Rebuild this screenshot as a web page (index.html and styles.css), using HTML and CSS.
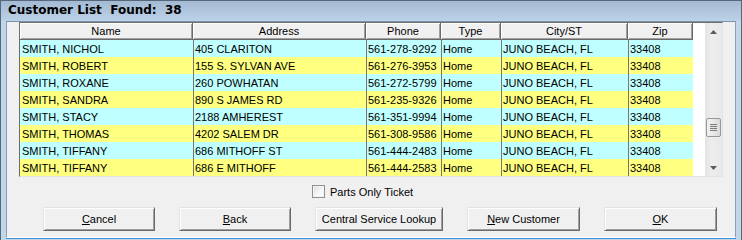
FILE: index.html
```html
<!DOCTYPE html>
<html lang="en">
    <head>
        <meta charset="UTF-8">
        <title>Customer List</title>
        <link rel="stylesheet" href="styles.css">
    </head>
    <body>
        <div class="window">
            <div class="titlebar">Customer List  Found:  38</div>
            <div class="client">
                <div class="grid">
                    <div class="grid-view">
                        <div class="row head">
                            <div class="cell">Name</div>
                            <div class="cell">Address</div>
                            <div class="cell">Phone</div>
                            <div class="cell">Type</div>
                            <div class="cell">City/ST</div>
                            <div class="cell">Zip</div>
                        </div>
                        <div class="row cyan">
                            <div class="cell">SMITH, NICHOL</div>
                            <div class="cell">405 CLARITON</div>
                            <div class="cell">561-278-9292</div>
                            <div class="cell">Home</div>
                            <div class="cell">JUNO BEACH, FL</div>
                            <div class="cell">33408</div>
                        </div>
                        <div class="row yellow">
                            <div class="cell">SMITH, ROBERT</div>
                            <div class="cell">155 S. SYLVAN AVE</div>
                            <div class="cell">561-276-3953</div>
                            <div class="cell">Home</div>
                            <div class="cell">JUNO BEACH, FL</div>
                            <div class="cell">33408</div>
                        </div>
                        <div class="row cyan">
                            <div class="cell">SMITH, ROXANE</div>
                            <div class="cell">260 POWHATAN</div>
                            <div class="cell">561-272-5799</div>
                            <div class="cell">Home</div>
                            <div class="cell">JUNO BEACH, FL</div>
                            <div class="cell">33408</div>
                        </div>
                        <div class="row yellow">
                            <div class="cell">SMITH, SANDRA</div>
                            <div class="cell">890 S JAMES RD</div>
                            <div class="cell">561-235-9326</div>
                            <div class="cell">Home</div>
                            <div class="cell">JUNO BEACH, FL</div>
                            <div class="cell">33408</div>
                        </div>
                        <div class="row cyan">
                            <div class="cell">SMITH, STACY</div>
                            <div class="cell">2188 AMHEREST</div>
                            <div class="cell">561-351-9994</div>
                            <div class="cell">Home</div>
                            <div class="cell">JUNO BEACH, FL</div>
                            <div class="cell">33408</div>
                        </div>
                        <div class="row yellow">
                            <div class="cell">SMITH, THOMAS</div>
                            <div class="cell">4202 SALEM DR</div>
                            <div class="cell">561-308-9586</div>
                            <div class="cell">Home</div>
                            <div class="cell">JUNO BEACH, FL</div>
                            <div class="cell">33408</div>
                        </div>
                        <div class="row cyan">
                            <div class="cell">SMITH, TIFFANY</div>
                            <div class="cell">686 MITHOFF ST</div>
                            <div class="cell">561-444-2483</div>
                            <div class="cell">Home</div>
                            <div class="cell">JUNO BEACH, FL</div>
                            <div class="cell">33408</div>
                        </div>
                        <div class="row yellow">
                            <div class="cell">SMITH, TIFFANY</div>
                            <div class="cell">686 E MITHOFF</div>
                            <div class="cell">561-444-2583</div>
                            <div class="cell">Home</div>
                            <div class="cell">JUNO BEACH, FL</div>
                            <div class="cell">33408</div>
                        </div>
                    </div>
                    <div class="vscroll">
                        <div class="arrow">
                            <svg width="7" height="4" viewBox="0 0 7 4"><path d="M3.5 0L7 4H0z" fill="#5a5a5a"/></svg>
                        </div>
                        <div class="track">
                            <div class="thumb">
                                <span></span><span></span><span></span><span></span>
                            </div>
                        </div>
                        <div class="arrow">
                            <svg width="7" height="4" viewBox="0 0 7 4"><path d="M0 0H7L3.5 4z" fill="#5a5a5a"/></svg>
                        </div>
                    </div>
                </div>
                <label class="check"><span class="box"></span>Parts Only Ticket</label>
                <div class="buttons">
                    <button class="btn"><u>C</u>ancel</button>
                    <button class="btn"><u>B</u>ack</button>
                    <button class="btn wide">Central Service Lookup</button>
                    <button class="btn"><u>N</u>ew Customer</button>
                    <button class="btn"><u>O</u>K</button>
                </div>
            </div>
        </div>
    </body>
</html>
```

FILE: styles.css
```css
body {
    margin: 0;
    font-family: "Liberation Sans", Arial, sans-serif;
    font-size: 11px;
    color: #000;
}
.window {
    width: 742px;
    height: 240px;
    box-sizing: border-box;
    display: flex;
    flex-direction: column;
    background: #c2d6ea;
    border: 1px solid #55687c;
    border-bottom: none;
}
.titlebar {
    height: 20px;
    padding-left: 7px;
    font-family: "DejaVu Sans", sans-serif;
    font-weight: bold;
    font-size: 12px;
    line-height: 19px;
    white-space: pre;
    background: linear-gradient(#a4bad2, #bcd2e9);
}
.client {
    flex: 1;
    margin: 0 5px 2px 5px;
    border: 1px solid #8aa0b8;
    border-top-color: #7e93aa;
    border-bottom: 1px solid #fff;
    background: #f0f0f0;
    display: flex;
    flex-direction: column;
    box-shadow: 0 1px 0 #3d8fd2;
}
.grid {
    display: flex;
    width: 704px;
    height: 155px;
    box-sizing: border-box;
    margin-left: 12px;
    border: 1px solid;
    border-color: #6d6d6d #e3e3e3 #e3e3e3 #6d6d6d;
    background: #fff;
}
.grid-view {
    flex: 1;
    background: #fff;
}
.row {
    display: grid;
    grid-template-columns: 173px 173px 75px 60px 127px 65px;
    height: 17px;
    width: 673px;
}
.row .cell {
    padding: 1px 0 0 1px;
    line-height: 16px;
    white-space: nowrap;
    overflow: hidden;
    border-left: 1px solid #767676;
}
.row .cell:first-child {
    padding-left: 2px;
    border-left: none;
}
.cyan {
    background: #bfffff;
}
.yellow {
    background: #ffff80;
}
.head .cell,
.head .cell:first-child {
    box-sizing: border-box;
    height: 17px;
    padding: 0;
    border-left: none;
    border-right: 1px solid #696969;
    border-bottom: 1px solid #696969;
    background: #f0f0f0;
    box-shadow: inset 1px 1px #fff, inset -1px -1px #a0a0a0;
    text-align: center;
    line-height: 16px;
}
.vscroll {
    width: 17px;
    display: flex;
    flex-direction: column;
    background: linear-gradient(90deg, #e3e3e3, #ededed 40%, #e8e8e8);
}
.arrow {
    height: 17px;
    display: flex;
    align-items: center;
    justify-content: center;
}
.track {
    flex: 1;
}
.thumb {
    width: 15px;
    height: 19px;
    margin: 78px 0 0 1px;
    box-sizing: border-box;
    border: 1px solid #979797;
    border-radius: 2px;
    background: linear-gradient(90deg, #f2f2f2, #e8e8e8 50%, #d9d9d9);
    display: flex;
    flex-direction: column;
    align-items: center;
    justify-content: center;
    gap: 1px;
}
.thumb span {
    width: 7px;
    height: 1px;
    background: #7a7a7a;
}
.check {
    display: flex;
    align-items: center;
    gap: 5px;
    margin: 8px 0 0 305px;
    height: 13px;
}
.box {
    width: 13px;
    height: 13px;
    box-sizing: border-box;
    border: 1px solid #8e8f8f;
    background: linear-gradient(135deg, #dedede, #fbfbfb 70%);
    box-shadow: inset 0 0 0 1px #f4f4f4;
}
.buttons {
    display: flex;
    gap: 24px;
    margin: 9px 0 0 36px;
}
.btn {
    width: 112px;
    height: 24px;
    padding: 0;
    font: 11px "Liberation Sans", Arial, sans-serif;
    color: #000;
    background: #f0f0f0;
    border: 1px solid;
    border-color: #e3e3e3 #696969 #696969 #e3e3e3;
    box-shadow: inset 1px 1px #fff, inset -1px -1px #a0a0a0;
}
.btn.wide {
    width: 128px;
}
.btn:nth-child(n+4) {
    width: 113px;
}
```
